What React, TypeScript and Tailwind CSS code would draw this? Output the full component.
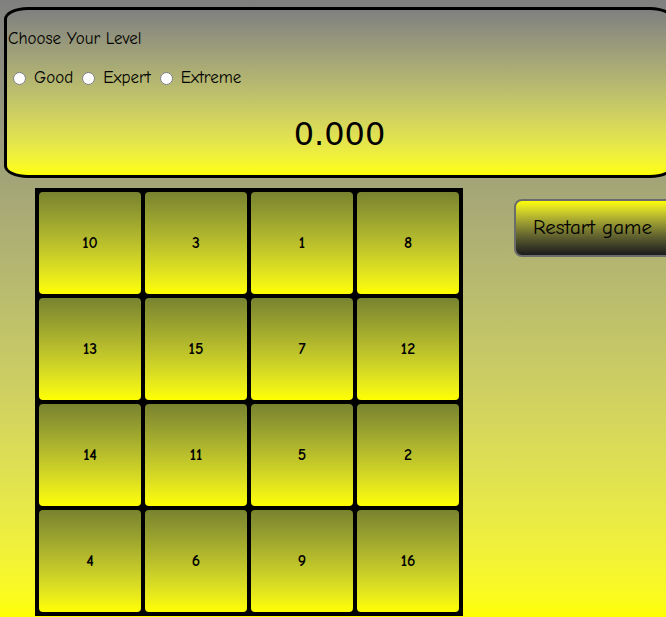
const tiles = [10, 3, 1, 8, 13, 15, 7, 12, 14, 11, 5, 2, 4, 6, 9, 16];

const levels = ["Good", "Expert", "Extreme"];

const font = "font-['Comic_Sans_MS','Comic_Neue','DejaVu_Sans',sans-serif]";

const App = () => {
	return (
		<div
			className={`h-[617px] w-[666px] overflow-hidden bg-linear-to-b from-[#808080] to-[#ffff00] text-black ${font}`}
		>
			<div className="ml-[4px] pt-[7px]">
				<div className="flex h-[171px] w-[670px] flex-col rounded-[24px/12px] border-[3px] border-black bg-linear-to-b from-[#808080] to-[#ffff00] pl-[1px]">
					<p className="mt-[19px] text-[17px] leading-[20px]">Choose Your Level</p>
					<div className="mt-[19px] flex items-center gap-[8px] pl-[5px] text-[17px] leading-[20px]">
						{levels.map((level) => (
							<label key={level} className="mr-[1px] flex items-center gap-[8px]">
								<input type="radio" name="level" className="m-0 h-[13px] w-[13px]" />
								<span>{level}</span>
							</label>
						))}
					</div>
					<p className="mt-[26px] text-center font-['DejaVu_Sans',sans-serif] text-[32px] leading-[40px]">
						0.000
					</p>
				</div>
			</div>

			<div className="mt-[10px] flex items-start">
				<div className="ml-[35px] grid w-[428px] shrink-0 grid-cols-4 gap-[4px] bg-black p-[4px]">
					{tiles.map((n) => (
						<div
							key={n}
							className="flex h-[102px] items-center justify-center rounded-[4px] bg-linear-to-b from-[#78832f] to-[#ffff00] text-[16px] font-bold"
						>
							{n}
						</div>
					))}
				</div>
				<button className="mt-[11px] ml-[51px] h-[58px] w-[170px] shrink-0 rounded-[8px] border-2 border-[#6b6b6b] bg-linear-to-b from-[#ffff00] to-[#1c1c1c] pl-[17px] text-left text-[21px]">
					Restart game
				</button>
			</div>
		</div>
	);
};

export default App;
